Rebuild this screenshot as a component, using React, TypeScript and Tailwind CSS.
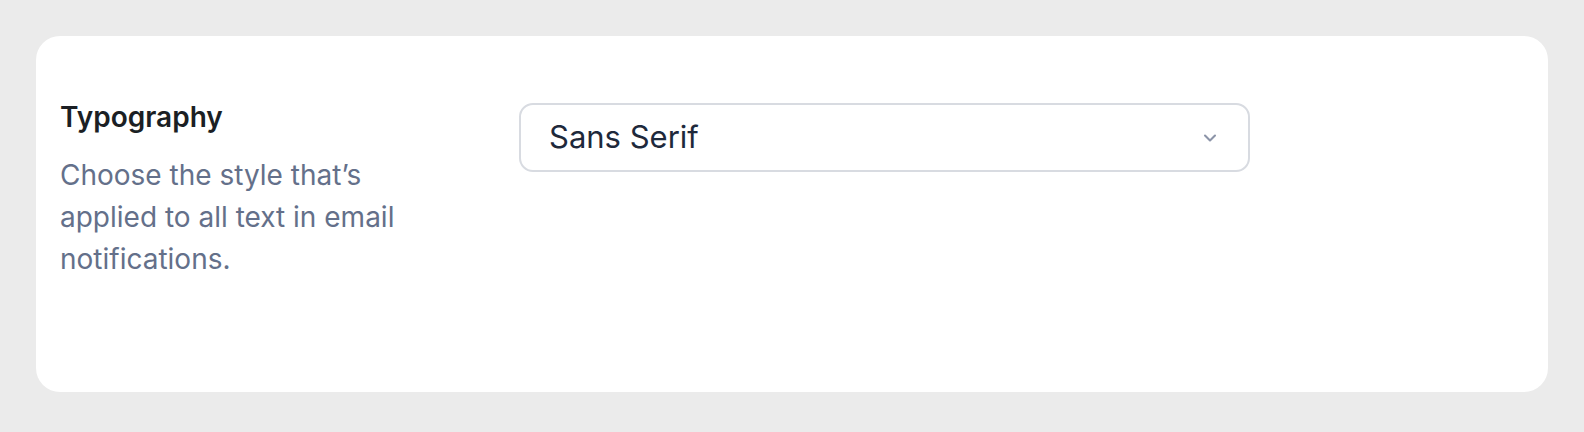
import { ChevronDown } from 'lucide-react';

export default function App() {
  return (
    <div className="min-h-[432px] w-full bg-[#ebebeb] p-9 font-['Inter',sans-serif]">
      <div className="flex h-[356px] items-start rounded-[24px] bg-white px-6 pt-[60px]">
        {/* Label + help text */}
        <div className="w-[459px] shrink-0">
          <h2 className="mt-[1px] text-[28px] font-semibold leading-[40px] text-[#1b1f24]">Typography</h2>
          <p className="mt-[17px] max-w-[360px] text-[28px] leading-[42px] text-[#64708a]">
            Choose the style that’s applied to all text in email notifications.
          </p>
        </div>

        {/* Font select */}
        <button className="mt-[7px] flex h-[69px] w-[731px] items-center justify-between rounded-[14px] border-2 border-[#d8dbe1] bg-white pl-7 pr-7 text-left">
          <span className="text-[31px] text-[#1e293b]">Sans Serif</span>
          <ChevronDown className="h-5 w-5 text-[#8c94a8]" strokeWidth={2.5} />
        </button>
      </div>
    </div>
  );
}
